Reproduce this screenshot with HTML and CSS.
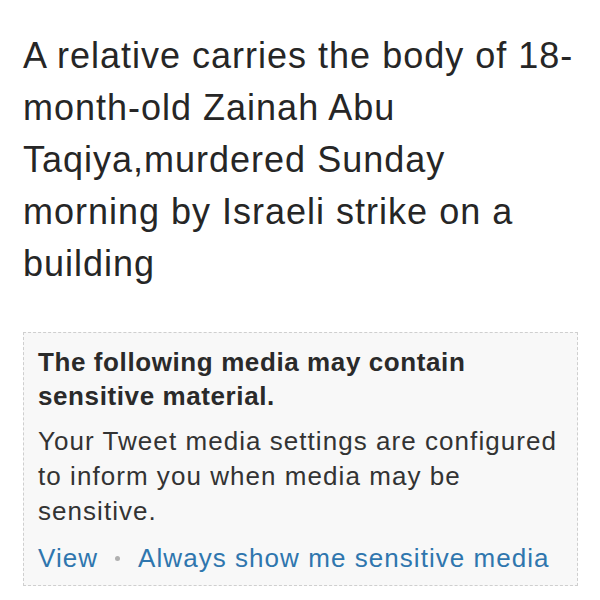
FILE: index.html
```html
<!DOCTYPE html>
<html>
<head>
<meta charset="utf-8">
<link rel="stylesheet" href="styles.css">
</head>
<body>
<div class="page">
  <p class="headline">A relative carries the body of 18-month-old Zainah Abu Taqiya,murdered Sunday morning by Israeli strike on a building</p>
  <div class="notice">
    <p class="notice-title">The following media may contain sensitive material.</p>
    <p class="notice-text">Your Tweet media settings are configured to inform you when media may be sensitive.</p>
    <div class="notice-links">
      <a class="link">View</a>
      <span class="dot"></span>
      <a class="link">Always show me sensitive media</a>
    </div>
  </div>
</div>
</body>
</html>
```

FILE: styles.css
```css
html, body {
  margin: 0;
  padding: 0;
  background: #ffffff;
}
.page {
  padding: 30px 20px 0 23px;
  font-family: "Liberation Sans", Arial, sans-serif;
}
.headline {
  margin: 0;
  font-size: 36px;
  line-height: 52px;
  letter-spacing: 1px;
  color: #262626;
}
.notice {
  margin-top: 42px;
  width: 555px;
  box-sizing: border-box;
  border: 1px dashed #cfcfcf;
  background: #f8f8f8;
  padding: 12px 14px 10px 14px;
  font-size: 26px;
  line-height: 34px;
  letter-spacing: 1.05px;
}
.notice-title {
  margin: 0;
  font-weight: bold;
  letter-spacing: 0.6px;
  color: #2a2a2a;
}
.notice-text {
  margin: 11px 0 0 0;
  line-height: 35px;
  color: #333333;
}
.notice-links {
  margin-top: 12px;
  display: flex;
  align-items: center;
}
.link {
  color: #2f76ae;
  text-decoration: none;
}
.dot {
  width: 5px;
  height: 5px;
  border-radius: 50%;
  background: #b0b0b0;
  margin: 0 18px 0 17px;
}
```
